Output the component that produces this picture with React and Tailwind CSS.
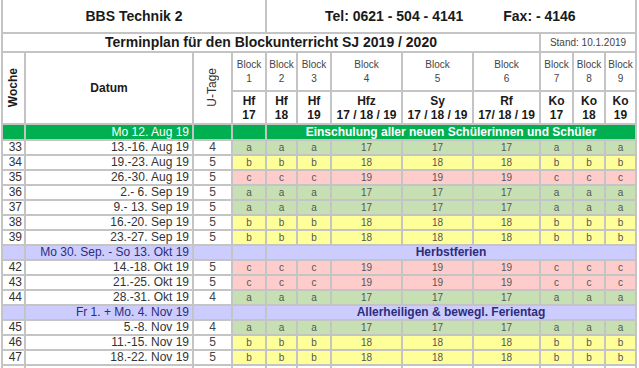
import React from 'react';

const cell = 'border-2 border-[#c4c4c4] p-0';
const fill = { a: 'bg-[#c6e0b4]', b: 'bg-[#ffff99]', c: 'bg-[#ffcccc]' };
const num = { a: '17', b: '18', c: '19' };

const weeks = [
  { w: '33', d: '13.-16. Aug 19', u: '4', k: 'a' },
  { w: '34', d: '19.-23. Aug 19', u: '5', k: 'b' },
  { w: '35', d: '26.-30. Aug 19', u: '5', k: 'c' },
  { w: '36', d: '2.- 6. Sep 19', u: '5', k: 'a' },
  { w: '37', d: '9.- 13. Sep 19', u: '5', k: 'a' },
  { w: '38', d: '16.-20. Sep 19', u: '5', k: 'b' },
  { w: '39', d: '23.-27. Sep 19', u: '5', k: 'b' },
  { note: 'Mo 30. Sep. - So 13. Okt 19', text: 'Herbstferien' },
  { w: '42', d: '14.-18. Okt 19', u: '5', k: 'c' },
  { w: '43', d: '21.-25. Okt 19', u: '5', k: 'c' },
  { w: '44', d: '28.-31. Okt 19', u: '4', k: 'a' },
  { note: 'Fr 1. + Mo. 4. Nov 19', text: 'Allerheiligen & bewegl. Ferientag' },
  { w: '45', d: '5.-8. Nov 19', u: '4', k: 'a' },
  { w: '46', d: '11.-15. Nov 19', u: '5', k: 'b' },
  { w: '47', d: '18.-22. Nov 19', u: '5', k: 'b' },
];

const blocks = [
  { n: '1', s: 'Hf', y: '17' },
  { n: '2', s: 'Hf', y: '18' },
  { n: '3', s: 'Hf', y: '19' },
  { n: '4', s: 'Hfz', y: '17 / 18 / 19' },
  { n: '5', s: 'Sy', y: '17 / 18 / 19' },
  { n: '6', s: 'Rf', y: '17/ 18 / 19' },
  { n: '7', s: 'Ko', y: '17' },
  { n: '8', s: 'Ko', y: '18' },
  { n: '9', s: 'Ko', y: '19' },
];

const widths = [23, 168, 39, 34, 31, 34, 71, 71, 67, 33, 32, 31];

const WeekRow = ({ row }) => {
  const bg = fill[row.k];
  return (
    <tr className="h-[15px]">
      <td className={`${cell} text-right pr-[2px] text-[12px] text-[#333]`}>{row.w}</td>
      <td className={`${cell} text-right pr-[3px] text-[12px] text-[#333]`}>{row.d}</td>
      <td className={`${cell} text-center text-[12px] text-[#444]`}>{row.u}</td>
      {[0, 1, 2].map((i) => (
        <td key={i} className={`${cell} ${bg} text-center text-[10px] text-[#555]`}>{row.k}</td>
      ))}
      {[3, 4, 5].map((i) => (
        <td key={i} className={`${cell} ${bg} text-center text-[10px] text-[#555]`}>{num[row.k]}</td>
      ))}
      {[6, 7, 8].map((i) => (
        <td key={i} className={`${cell} ${bg} text-center text-[10px] text-[#555]`}>{row.k}</td>
      ))}
    </tr>
  );
};

const NoteRow = ({ row }) => (
  <tr className="h-[15px] bg-[#ccccff] text-[#2d2d7a]">
    <td className={cell}></td>
    <td className={`${cell} text-right pr-[3px] text-[12px]`}>{row.note}</td>
    <td className={cell}></td>
    <td className={cell}></td>
    <td colSpan={8} className={`${cell} text-center text-[12px] font-bold`}>{row.text}</td>
  </tr>
);

export default function App() {
  return (
    <div className="h-[368px] w-[639px] overflow-hidden bg-white pl-[1px] font-['Liberation_Sans',Arial,sans-serif] leading-[13px] text-[#222]">
      <table className="table-fixed border-collapse w-[636px]">
        <colgroup>
          {widths.map((w, i) => (
            <col key={i} style={{ width: w }} />
          ))}
        </colgroup>
        <tbody>
          <tr className="h-[33px]">
            <td colSpan={4} className={`${cell} border-t-0 text-center text-[14px] font-bold text-[#1a1a1a]`}>
              BBS Technik 2
            </td>
            <td colSpan={8} className={`${cell} border-t-0 text-[14px] font-bold text-[#1a1a1a]`}>
              <div className="flex pl-[58px] gap-[40px]">
                <span>Tel: 0621 - 504 - 4141</span>
                <span>Fax: - 4146</span>
              </div>
            </td>
          </tr>
          <tr className="h-[19px]">
            <td colSpan={9} className={`${cell} text-center text-[14px] font-bold text-[#1a1a1a]`}>
              Terminplan für den Blockunterricht SJ 2019 / 2020
            </td>
            <td colSpan={3} className={`${cell} text-center text-[10px] text-[#444]`}>
              Stand: 10.1.2019
            </td>
          </tr>
          <tr className="h-[39px]">
            <td rowSpan={2} className={`${cell} text-center`}>
              <span className="inline-block [writing-mode:vertical-rl] rotate-180 text-[12px] font-bold text-[#1a1a1a]">Woche</span>
            </td>
            <td rowSpan={2} className={`${cell} text-center text-[12px] font-bold text-[#1a1a1a]`}>Datum</td>
            <td rowSpan={2} className={`${cell} text-center`}>
              <span className="inline-block [writing-mode:vertical-rl] rotate-180 text-[12px] text-[#333]">U-Tage</span>
            </td>
            {blocks.map((b) => (
              <td key={b.n} className={`${cell} text-center text-[10px] leading-[14px] text-[#444]`}>
                <div>Block</div>
                <div>{b.n}</div>
              </td>
            ))}
          </tr>
          <tr className="h-[33px]">
            {blocks.map((b) => (
              <td key={b.n} className={`${cell} text-center text-[12px] font-bold leading-[14px] text-[#1a1a1a]`}>
                <div>{b.s}</div>
                <div>{b.y}</div>
              </td>
            ))}
          </tr>
          <tr className="h-[16px] bg-[#00b050] text-white">
            <td className={cell}></td>
            <td className={`${cell} text-right pr-[3px] text-[12px]`}>Mo 12. Aug 19</td>
            <td className={cell}></td>
            <td className={cell}></td>
            <td colSpan={8} className={`${cell} text-center text-[12px] font-bold`}>
              Einschulung aller neuen Schülerinnen und Schüler
            </td>
          </tr>
          {weeks.map((row, i) =>
            row.note ? <NoteRow key={i} row={row} /> : <WeekRow key={i} row={row} />
          )}
          <tr className="h-[15px]">
            {widths.map((w, i) => (
              <td key={i} className={cell}></td>
            ))}
          </tr>
        </tbody>
      </table>
    </div>
  );
}
